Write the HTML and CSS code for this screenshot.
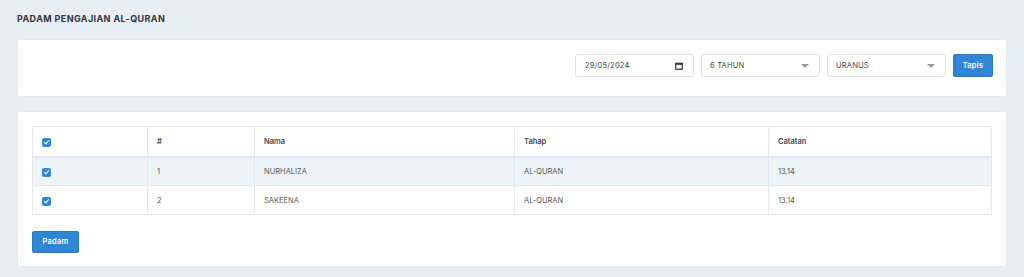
FILE: index.html
```html
<!DOCTYPE html>
<html lang="ms">
<head>
    <meta charset="UTF-8">
    <meta name="viewport" content="width=device-width, initial-scale=1.0">
    <title>Padam Pengajian Al-Quran</title>
    <link rel="stylesheet" href="styles.css">
</head>
<body>
    <div class="page">
        <h1 class="page-title">PADAM PENGAJIAN AL-QURAN</h1>

        <div class="card filter-card">
            <div class="field date-field">
                <span>29/05/2024</span>
                <svg width="8" height="8" viewBox="0 0 8 8"><rect x="0.75" y="1.25" width="6.5" height="6" fill="none" stroke="#333" stroke-width="1.2"/><rect x="0.75" y="1.25" width="6.5" height="1.6" fill="#333"/></svg>
            </div>
            <div class="field select-field">
                <span>6 TAHUN</span>
                <i class="caret"></i>
            </div>
            <div class="field select-field">
                <span>URANUS</span>
                <i class="caret"></i>
            </div>
            <button class="btn btn-filter">Tapis</button>
        </div>

        <div class="card table-card">
            <table class="data-table">
                <thead>
                    <tr>
                        <th class="col-check"><span class="check"></span></th>
                        <th class="col-no">#</th>
                        <th class="col-nama">Nama</th>
                        <th class="col-tahap">Tahap</th>
                        <th>Catatan</th>
                    </tr>
                </thead>
                <tbody>
                    <tr class="striped">
                        <td><span class="check"></span></td>
                        <td>1</td>
                        <td>NURHALIZA</td>
                        <td>AL-QURAN</td>
                        <td>13,14</td>
                    </tr>
                    <tr>
                        <td><span class="check"></span></td>
                        <td>2</td>
                        <td>SAKEENA</td>
                        <td>AL-QURAN</td>
                        <td>13,14</td>
                    </tr>
                </tbody>
            </table>
            <button class="btn btn-delete">Padam</button>
        </div>
    </div>
</body>
</html>
```

FILE: styles.css
```css
* {
    margin: 0;
    padding: 0;
    box-sizing: border-box;
}

body {
    font-family: Inter, "Open Sans", sans-serif;
    background-color: #e8eef2;
    color: #555;
}

.page {
    padding: 13px 17px 0 17px;
}

.page-title {
    font-size: 9px;
    font-weight: 700;
    color: #2f3640;
    letter-spacing: 0.4px;
    height: 26px;
}

.card {
    background: #fff;
    border-radius: 3px;
    border: 1px solid #e2e8ec;
}

.filter-card {
    display: flex;
    justify-content: flex-end;
    align-items: center;
    gap: 7px;
    height: 58px;
    padding: 0 13px 5px 0;
    margin-bottom: 14px;
}

.field {
    width: 119px;
    height: 23px;
    border: 1px solid #dde2e6;
    border-radius: 3px;
    display: flex;
    align-items: center;
    justify-content: space-between;
    padding: 0 10px 0 8px;
    font-size: 7.5px;
    color: #444;
    letter-spacing: 0.2px;
}

.date-field {
    padding-left: 9px;
}

.caret {
    width: 0;
    height: 0;
    border-left: 4px solid transparent;
    border-right: 4px solid transparent;
    border-top: 4px solid #999;
}

.btn {
    background: #2e86d4;
    color: #fff;
    border: 1px solid #2a7cc7;
    border-radius: 2px;
    font-family: inherit;
    font-size: 7.5px;
    font-weight: 600;
    height: 23px;
    padding: 0;
    letter-spacing: 0.2px;
}

.btn-filter {
    width: 40px;
}

.table-card {
    padding: 14px 14px 13px 14px;
}

.data-table {
    width: 100%;
    border-collapse: collapse;
    border: 1px solid #e3e8ec;
    font-size: 7.5px;
    margin-bottom: 13px;
}

.data-table th,
.data-table td {
    border: 1px solid #e3e8ec;
    text-align: left;
    padding: 0 9px;
    height: 29px;
}

.data-table th {
    font-weight: 600;
    color: #444;
    height: 30px;
    border-bottom-width: 2px;
}

.data-table td {
    color: #555;
}

.striped td {
    background: #eef5f9;
}

.col-check { width: 115px; }
.col-no { width: 107px; }
.col-nama { width: 260px; }
.col-tahap { width: 254px; }

.check {
    display: inline-block;
    width: 9px;
    height: 9px;
    border-radius: 2px;
    background: #2e86d4;
    position: relative;
    vertical-align: middle;
    top: 1px;
}

.check::after {
    content: '';
    position: absolute;
    left: 3px;
    top: 1.5px;
    width: 2px;
    height: 4px;
    border: solid #fff;
    border-width: 0 1.2px 1.2px 0;
    transform: rotate(40deg);
}

.btn-delete {
    width: 47px;
    height: 22px;
}
```
